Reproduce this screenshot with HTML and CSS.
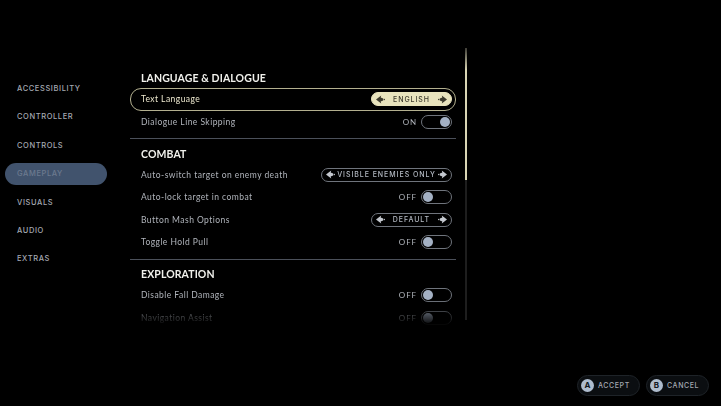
FILE: index.html
```html
<!DOCTYPE html>
<html lang="en">
<head>
    <meta charset="UTF-8">
    <meta name="viewport" content="width=device-width, initial-scale=1.0">
    <title>Settings</title>
    <link rel="stylesheet" href="styles.css">
</head>
<body>
    <svg class="defs" width="0" height="0">
        <symbol id="arrow-left" viewBox="0 0 10 10">
            <path d="M0 5 L5.8 0.6 L5.2 2.8 L8 4 L8 6 L5.2 7.2 L5.8 9.4 Z"/>
            <circle cx="9.2" cy="5" r="0.8"/>
        </symbol>
        <symbol id="arrow-right" viewBox="0 0 10 10">
            <path d="M10 5 L4.2 0.6 L4.8 2.8 L2 4 L2 6 L4.8 7.2 L4.2 9.4 Z"/>
            <circle cx="0.8" cy="5" r="0.8"/>
        </symbol>
    </svg>
    <div class="page">
        <div class="content">
            <nav class="sidebar">
                <div class="nav-item">ACCESSIBILITY</div>
                <div class="nav-item">CONTROLLER</div>
                <div class="nav-item">CONTROLS</div>
                <div class="nav-item active">GAMEPLAY</div>
                <div class="nav-item">VISUALS</div>
                <div class="nav-item">AUDIO</div>
                <div class="nav-item">EXTRAS</div>
            </nav>
            <main class="settings">
                <section class="group">
                    <h2>LANGUAGE &amp; DIALOGUE</h2>
                    <div class="row selected">
                        <span>Text Language</span>
                        <div class="picker">
                            <svg class="arrow"><use href="#arrow-left"/></svg>
                            <span class="picker-value">ENGLISH</span>
                            <svg class="arrow"><use href="#arrow-right"/></svg>
                        </div>
                    </div>
                    <div class="row">
                        <span>Dialogue Line Skipping</span>
                        <div class="switch-wrap">
                            <span>ON</span>
                            <div class="switch on"><i></i></div>
                        </div>
                    </div>
                </section>
                <section class="group">
                    <h2>COMBAT</h2>
                    <div class="row">
                        <span>Auto-switch target on enemy death</span>
                        <div class="picker wide">
                            <svg class="arrow"><use href="#arrow-left"/></svg>
                            <span class="picker-value">VISIBLE ENEMIES ONLY</span>
                            <svg class="arrow"><use href="#arrow-right"/></svg>
                        </div>
                    </div>
                    <div class="row">
                        <span>Auto-lock target in combat</span>
                        <div class="switch-wrap">
                            <span>OFF</span>
                            <div class="switch"><i></i></div>
                        </div>
                    </div>
                    <div class="row">
                        <span>Button Mash Options</span>
                        <div class="picker">
                            <svg class="arrow"><use href="#arrow-left"/></svg>
                            <span class="picker-value">DEFAULT</span>
                            <svg class="arrow"><use href="#arrow-right"/></svg>
                        </div>
                    </div>
                    <div class="row">
                        <span>Toggle Hold Pull</span>
                        <div class="switch-wrap">
                            <span>OFF</span>
                            <div class="switch"><i></i></div>
                        </div>
                    </div>
                </section>
                <section class="group">
                    <h2>EXPLORATION</h2>
                    <div class="row">
                        <span>Disable Fall Damage</span>
                        <div class="switch-wrap">
                            <span>OFF</span>
                            <div class="switch"><i></i></div>
                        </div>
                    </div>
                    <div class="row">
                        <span>Navigation Assist</span>
                        <div class="switch-wrap">
                            <span>OFF</span>
                            <div class="switch"><i></i></div>
                        </div>
                    </div>
                </section>
            </main>
            <div class="scrollbar"><div class="thumb"></div></div>
        </div>
        <footer class="actions">
            <div class="action"><b>A</b>ACCEPT</div>
            <div class="action"><b>B</b>CANCEL</div>
        </footer>
    </div>
</body>
</html>
```

FILE: styles.css
```css
* {
    box-sizing: border-box;
}
html, body {
    margin: 0;
    padding: 0;
    background-color: #000;
}
body {
    font-family: "Lato", "Liberation Sans", sans-serif;
    color: #aeb4bd;
    overflow: hidden;
}
.defs {
    display: block;
    height: 0;
}
.page {
    width: 721px;
    height: 406px;
    display: flex;
    flex-direction: column;
    justify-content: space-between;
}
.content {
    display: flex;
    align-items: flex-start;
}
.sidebar {
    width: 102px;
    margin: 78px 0 0 5px;
    display: flex;
    flex-direction: column;
    gap: 6.4px;
}
.nav-item {
    height: 22px;
    padding-left: 12px;
    border-radius: 11px;
    font-family: "Inter", sans-serif;
    font-size: 7.5px;
    font-weight: 500;
    letter-spacing: 0.6px;
    line-height: 22px;
    color: #a4a9b2;
}
.nav-item.active {
    background-color: #41536d;
    color: #6c7a8f;
}
.settings {
    width: 326px;
    height: 258px;
    margin: 68px 0 0 23px;
    overflow: hidden;
    -webkit-mask-image: linear-gradient(to bottom, #000 90%, transparent 100%);
    mask-image: linear-gradient(to bottom, #000 90%, transparent 100%);
}
.group {
    padding-bottom: 5px;
}
.group + .group {
    border-top: 1px solid #4b505a;
    padding-top: 4.5px;
}
h2 {
    margin: 0;
    height: 20px;
    padding-left: 11px;
    font-size: 10.5px;
    font-weight: 700;
    letter-spacing: 0.1px;
    line-height: 20px;
    color: #f1f1ec;
}
.row {
    height: 22.5px;
    padding: 0 4px 0 11px;
    display: flex;
    align-items: center;
    justify-content: space-between;
    font-size: 8.5px;
    letter-spacing: 0.45px;
    color: #b0b4bb;
}
.row.selected {
    border: 1px solid #b3b08f;
    border-radius: 11px;
    padding: 0 3px 0 10px;
    color: #eee9cf;
}
.picker {
    width: 81px;
    height: 14px;
    padding: 0 4px;
    border: 1px solid #6f747c;
    border-radius: 7px;
    display: flex;
    align-items: center;
    justify-content: space-between;
    color: #b4bac3;
}
.picker.wide {
    width: 131px;
}
.picker-value {
    font-family: "Inter", sans-serif;
    font-size: 7px;
    font-weight: 500;
    letter-spacing: 0.95px;
    white-space: nowrap;
}
.arrow {
    width: 9px;
    height: 9px;
    fill: #c4c8cf;
}
.selected .picker {
    border-color: #e8e3bd;
    background-color: #e8e3bd;
    color: #3c3a2c;
}
.selected .arrow {
    fill: #3c3a2c;
}
.switch-wrap {
    display: flex;
    align-items: center;
    gap: 4px;
    font-size: 8px;
    letter-spacing: 0.9px;
}
.switch {
    width: 31px;
    height: 14px;
    padding: 0 1px;
    border: 1px solid #6f747c;
    border-radius: 7px;
    display: flex;
    align-items: center;
}
.switch.on {
    justify-content: flex-end;
}
.switch i {
    width: 10px;
    height: 10px;
    border-radius: 50%;
    background-color: #a4b1c4;
}
.scrollbar {
    width: 2px;
    height: 272px;
    margin: 48px 0 0 9px;
    background-color: #1e1e1e;
}
.thumb {
    height: 132px;
    background: linear-gradient(to bottom, #3e3d36 0, #d9d5b4 22px);
}
.actions {
    display: flex;
    justify-content: flex-end;
    gap: 6px;
    padding: 0 12px 10px 0;
}
.action {
    width: 63px;
    height: 21px;
    padding: 0 3px;
    border: 1px solid #1e2328;
    border-radius: 11px;
    background-color: #0b0e11;
    display: flex;
    align-items: center;
    gap: 4px;
    font-family: "Inter", sans-serif;
    font-size: 7px;
    font-weight: 500;
    letter-spacing: 0.6px;
    color: #a4a9b2;
}
.action b {
    width: 13px;
    height: 13px;
    border-radius: 50%;
    background-color: #aebccd;
    color: #11161c;
    font-size: 8px;
    letter-spacing: 0;
    line-height: 13px;
    text-align: center;
}
```
